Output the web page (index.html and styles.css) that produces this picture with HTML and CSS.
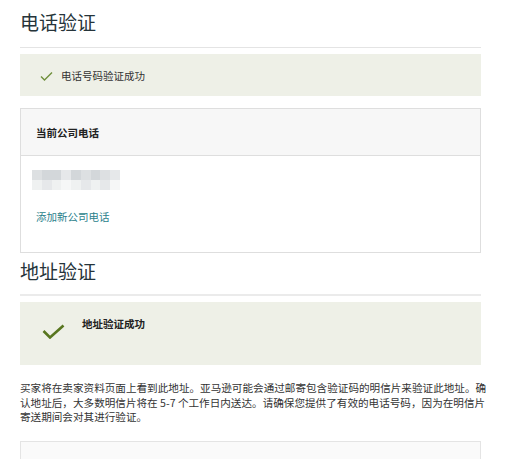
FILE: index.html
```html
<!DOCTYPE html>
<html lang="zh">

<head>
    <meta charset="UTF-8">
    <meta name="viewport" content="width=device-width, initial-scale=1.0">
    <title>电话验证</title>
    <link rel="stylesheet" href="styles.css">
</head>

<body>
    <div class="page">
        <!-- 电话验证 -->
        <h1 class="section-title">电话验证</h1>
        <div class="notice notice-small">
            <svg class="check-small" width="13" height="10" viewBox="0 0 13 10">
                <path d="M1 5.5 L4.5 9 L12 1.5" fill="none" stroke="#6f8f3c" stroke-width="1.4" />
            </svg>
            <span>电话号码验证成功</span>
        </div>

        <div class="card">
            <div class="card-header">当前公司电话</div>
            <div class="card-body">
                <div class="blur">
                    <span class="c2"></span><span class="c1"></span><span class="c1"></span><span class="c3"></span><span class="c1"></span><span class="c2"></span><span class="c1"></span><span class="c2"></span><span class="c3"></span>
                    <span class="c4"></span><span class="c3"></span><span class="c4"></span><span class="c5"></span><span class="c4"></span><span class="c3"></span><span class="c4"></span><span class="c3"></span><span class="c5"></span>
                </div>
                <a class="link" href="#">添加新公司电话</a>
            </div>
        </div>

        <!-- 地址验证 -->
        <h1 class="section-title second">地址验证</h1>
        <div class="notice notice-big">
            <svg class="check-big" width="23" height="15" viewBox="0 0 23 15">
                <path d="M1.5 7 L8 13.5 L21.5 1.5" fill="none" stroke="#58761f" stroke-width="2.6" />
            </svg>
            <span class="notice-title">地址验证成功</span>
        </div>

        <p class="desc">买家将在卖家资料页面上看到此地址。亚马逊可能会通过邮寄包含验证码的明信片来验证此地址。确<br>认地址后，大多数明信片将在 5-7 个工作日内送达。请确保您提供了有效的电话号码，因为在明信片<br>寄送期间会对其进行验证。</p>

        <div class="card card-next"></div>
    </div>
</body>

</html>
```

FILE: styles.css
```css
body {
    margin: 0;
    padding: 0;
    background-color: #ffffff;
    font-family: 'Noto Sans CJK SC', 'Liberation Sans', sans-serif;
    color: #333;
}

.page {
    width: 461px;
    padding: 10px 0 0 20px;
}

.section-title {
    margin: 0;
    font-size: 19px;
    line-height: 24px;
    font-weight: 400;
    color: #26343a;
    padding-bottom: 13px;
    border-bottom: 1px solid #e4e4e4;
}

.section-title.second {
    margin-top: 6px;
    padding-bottom: 11px;
    border-bottom: 2px solid #ebebeb;
}

.notice {
    margin-top: 6px;
    background-color: #eef0e7;
    box-sizing: border-box;
    display: flex;
    font-size: 10.5px;
}

.notice-small {
    height: 42px;
    align-items: center;
    padding-left: 20px;
    gap: 8px;
}

.check-small {
    margin-top: 1px;
}

.notice-big {
    height: 63px;
    align-items: flex-start;
    padding: 15px 0 0 22px;
    gap: 17px;
}

.check-big {
    margin-top: 7px;
}

.notice-title {
    font-weight: bold;
    line-height: 14px;
    color: #222;
}

.card {
    margin-top: 12px;
    border: 1px solid #dedede;
    background-color: #fff;
}

.card-header {
    height: 46px;
    padding-left: 15px;
    display: flex;
    align-items: center;
    background-color: #f7f7f7;
    border-bottom: 1px solid #dedede;
    font-size: 10.5px;
    font-weight: bold;
    color: #222;
}

.card-body {
    padding: 14px 15px 28px 15px;
}

.blur {
    margin-left: -4px;
    width: 88px;
    height: 20px;
    display: grid;
    grid-template-columns: repeat(9, 1fr);
    grid-template-rows: 10px 10px;
    filter: blur(0.6px);
}

.c1 { background-color: #d3d7da; }
.c2 { background-color: #dde0e2; }
.c3 { background-color: #e6e8ea; }
.c4 { background-color: #eff1f1; }
.c5 { background-color: #f6f7f7; }

.link {
    display: block;
    margin-top: 20px;
    font-size: 10.5px;
    line-height: 14px;
    color: #2b7f8c;
    text-decoration: none;
}

.desc {
    margin: 16px 0 0 0;
    font-size: 10.6px;
    line-height: 14.5px;
    color: #333;
    white-space: nowrap;
}

.card-next {
    margin-top: 16px;
    height: 17px;
    background-color: #fafafa;
    border-color: #e4e4e4;
    border-bottom: none;
}
```
